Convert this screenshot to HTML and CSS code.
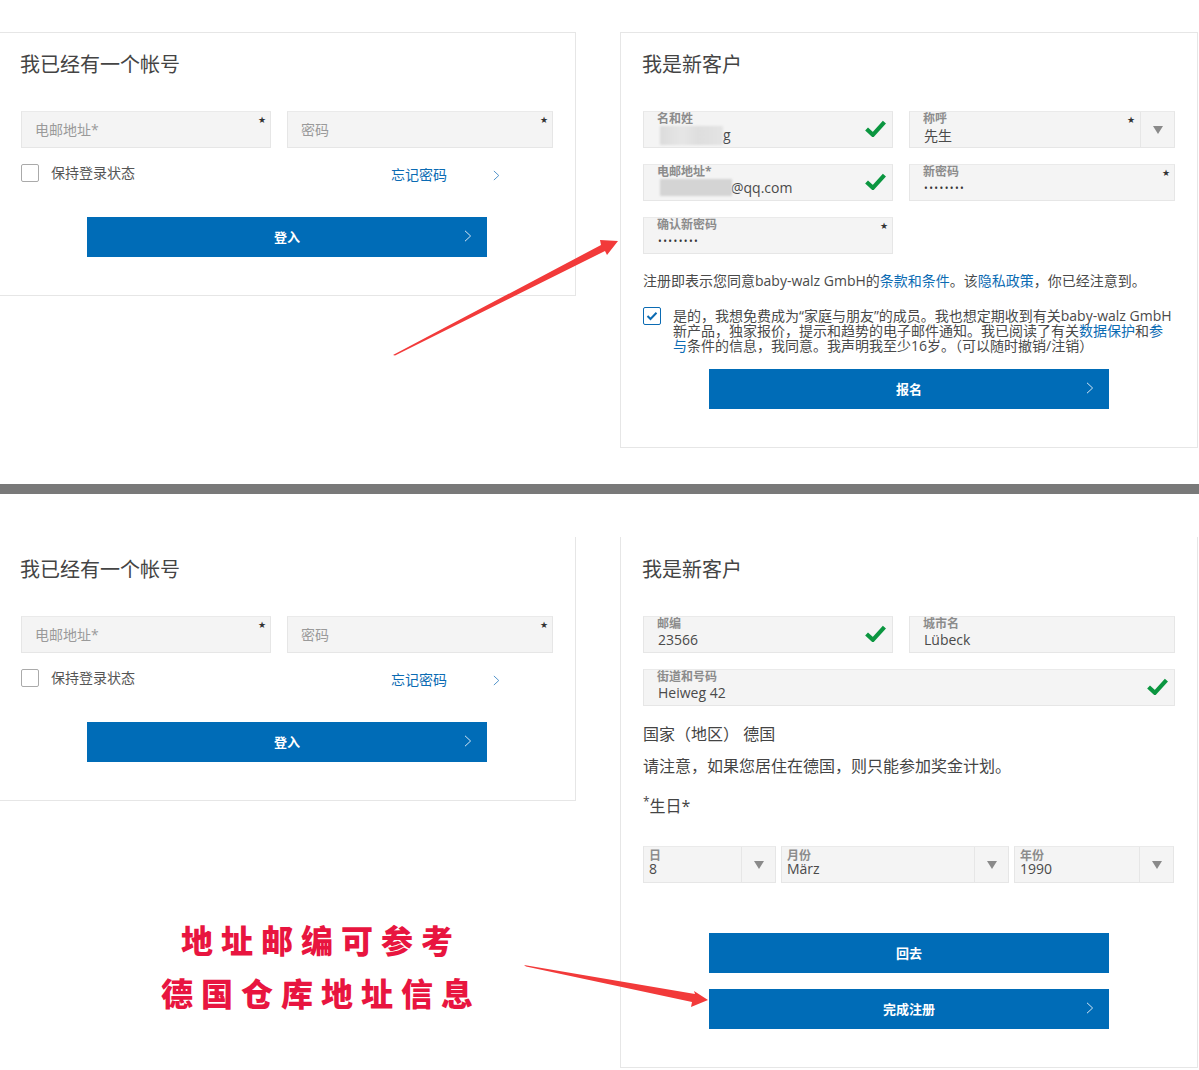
FILE: index.html
```html
<!DOCTYPE html>
<html lang="zh">
<head>
<meta charset="utf-8">
<title>注册</title>
<link rel="stylesheet" href="styles.css">
</head>
<body>
<div class="page">
  <section class="shot shot-top">
    <div class="card login">
      <h2>我已经有一个帐号</h2>
      <div class="row">
        <div class="field w250 empty"><span class="ph">电邮地址*</span><span class="star">★</span></div>
        <div class="field w266 empty"><span class="ph">密码</span><span class="star">★</span></div>
      </div>
      <div class="keep">
        <span class="box"></span><span class="keep-text">保持登录状态</span>
        <a class="forgot">忘记密码</a>
        <svg class="fchev" viewBox="0 0 8 12"><path d="M1 .8 6.6 6 1 11.2"/></svg>
      </div>
      <div class="btn login-btn">登入<svg class="chev" viewBox="0 0 8 12"><path d="M1 .8 6.6 6 1 11.2"/></svg></div>
    </div>
    <div class="card reg reg-top">
      <h2>我是新客户</h2>
      <div class="row">
        <div class="field w250"><label>名和姓</label><span class="val vg">g</span><i class="blur b1"></i>
          <svg class="ok" viewBox="0 0 20 16"><path d="M1.5 8.5 7.5 14 18.5 2"/></svg></div>
        <div class="field w266 sel"><label>称呼</label><span class="val cj">先生</span><span class="star s2">★</span><span class="drop"><b></b></span></div>
      </div>
      <div class="row">
        <div class="field w250"><label>电邮地址*</label><span class="val vr">@qq.com</span><i class="blur b2"></i>
          <svg class="ok" viewBox="0 0 20 16"><path d="M1.5 8.5 7.5 14 18.5 2"/></svg></div>
        <div class="field w266"><label>新密码</label><span class="val dots">••••••••</span><span class="star">★</span></div>
      </div>
      <div class="row">
        <div class="field w250"><label>确认新密码</label><span class="val dots">••••••••</span><span class="star">★</span></div>
      </div>
      <p class="terms">注册即表示您同意baby-walz GmbH的<a>条款和条件</a>。该<a>隐私政策</a>，你已经注意到。</p>
      <div class="consent">
        <span class="box on"><svg viewBox="0 0 12 10"><path d="M1.5 5 4.5 8 10.5 1.8"/></svg></span>
        <p>是的，我想免费成为“家庭与朋友”的成员。我也想定期收到有关baby-walz GmbH新产品，独家报价，提示和趋势的电子邮件通知。我已阅读了有关<a>数据保护</a>和<a>参与</a>条件的信息，我同意。我声明我至少16岁。（可以随时撤销/注销）</p>
      </div>
      <div class="btn reg-btn">报名<svg class="chev" viewBox="0 0 8 12"><path d="M1 .8 6.6 6 1 11.2"/></svg></div>
    </div>
  </section>

  <div class="divider"></div>

  <section class="shot shot-bottom">
    <div class="card login no-top">
      <h2>我已经有一个帐号</h2>
      <div class="row">
        <div class="field w250 empty"><span class="ph">电邮地址*</span><span class="star">★</span></div>
        <div class="field w266 empty"><span class="ph">密码</span><span class="star">★</span></div>
      </div>
      <div class="keep">
        <span class="box"></span><span class="keep-text">保持登录状态</span>
        <a class="forgot">忘记密码</a>
        <svg class="fchev" viewBox="0 0 8 12"><path d="M1 .8 6.6 6 1 11.2"/></svg>
      </div>
      <div class="btn login-btn">登入<svg class="chev" viewBox="0 0 8 12"><path d="M1 .8 6.6 6 1 11.2"/></svg></div>
    </div>
    <div class="card reg no-top">
      <h2>我是新客户</h2>
      <div class="row">
        <div class="field w250"><label>邮编</label><span class="val">23566</span>
          <svg class="ok" viewBox="0 0 20 16"><path d="M1.5 8.5 7.5 14 18.5 2"/></svg></div>
        <div class="field w266"><label>城市名</label><span class="val">Lübeck</span></div>
      </div>
      <div class="row">
        <div class="field w532"><label>街道和号码</label><span class="val">Heiweg 42</span>
          <svg class="ok" viewBox="0 0 20 16"><path d="M1.5 8.5 7.5 14 18.5 2"/></svg></div>
      </div>
      <p class="plain country">国家（地区） 德国</p>
      <p class="plain note">请注意，如果您居住在德国，则只能参加奖金计划。</p>
      <p class="birth"><sup>*</sup>生日*</p>
      <div class="dates">
        <div class="field date d1 sel"><label>日</label><span class="val">8</span><span class="drop"><b></b></span></div>
        <div class="field date d2 sel"><label>月份</label><span class="val">März</span><span class="drop"><b></b></span></div>
        <div class="field date d3 sel"><label>年份</label><span class="val">1990</span><span class="drop"><b></b></span></div>
      </div>
      <div class="btn back-btn">回去</div>
      <div class="btn done-btn">完成注册<svg class="chev" viewBox="0 0 8 12"><path d="M1 .8 6.6 6 1 11.2"/></svg></div>
    </div>
  </section>

  <div class="callout"><span>地址邮编可参考</span><span>德国仓库地址信息</span></div>
  <svg class="arrows" viewBox="0 0 1199 1070">
    <path d="M393 355 395 355.5 605 251 607 255 618 241 600 240 601 245Z"/>
    <path d="M524 965 526 966.5 692 1002 691 1007 708 1000 694 991 695 994Z"/>
  </svg>
</div>
</body>
</html>
```
FILE: styles.css
```css
* { box-sizing: border-box; }
html, body { margin: 0; background: #fff; }
body {
  font-family: "Open Sans", "Noto Sans CJK SC", sans-serif;
  font-size: 14px;
  color: #444;
}
.page { position: relative; width: 1199px; height: 1070px; overflow: hidden; }
.shot { display: flex; align-items: flex-start; }
.shot-top { height: 484px; padding-top: 32px; }
.shot-bottom { height: 576px; padding-top: 43px; }
.divider { height: 10px; background: #797979; }

.card { border: 1px solid #e6e6e6; background: #fff; }
.card.no-top { border-top: 0; }
.login { width: 577px; height: 264px; margin-left: -1px; padding: 0 21px; }
.reg { width: 578px; height: 531px; margin-left: 44px; padding: 0 22px; }
.reg-top { height: 416px; }

h2 { margin: 0 0 0 -1px; height: 78px; padding-top: 17px; font-size: 20px; line-height: 30px; font-weight: 400; color: #444; }
.no-top h2 { height: 79px; padding-top: 18px; }

.row { display: flex; gap: 16px; margin-bottom: 16px; }
.field {
  position: relative; height: 37px; background: #f4f4f4;
  border: 1px solid #e6e6e6; border-top-color: #eaeaea; padding: 0 14px; flex: none;
}
.w250 { width: 250px; }
.w266 { width: 266px; }
.w532 { width: 532px; }
.field label { display: block; margin-left: -1px; font-size: 12px; line-height: 13px; color: #8c8c8c; font-weight: 700; }
.val { display: block; font-size: 14px; line-height: 17px; color: #4a4a4a; margin-top: 1px; }
.val.cj { margin-top: 2px; }
.vg { margin-left: 65px; }
.vr { margin: 1px 0 0 73px; }
.dots { font-size: 10px; letter-spacing: 1.4px; line-height: 14px; margin-top: 3px; color: #333; }
.ph { display: block; margin-left: -1px; line-height: 36px; color: #9a9a9a; font-size: 14px; }
.star { position: absolute; right: 4px; top: 3px; font-family: "DejaVu Sans", sans-serif; font-size: 9px; line-height: 10px; color: #333; }
.s2 { right: 39px; }
.ok { position: absolute; right: 6px; top: 8px; width: 21px; height: 17px; fill: none; stroke: #0b9640; stroke-width: 4; }
.blur { position: absolute; display: block; filter: blur(1px); }
.b1 { left: 16px; top: 14px; width: 63px; height: 19px; background: linear-gradient(90deg, #dcdcdc, #e6e6e6 35%, #dedede 60%, #e4e4e4); }
.b2 { left: 16px; top: 14px; width: 72px; height: 17px; background: #d4d4d4; }

.drop { position: absolute; right: 0; top: 0; bottom: 0; width: 34px; border-left: 1px solid #e6e6e6; display: flex; align-items: center; justify-content: center; }
.drop b { width: 0; height: 0; border: 5px solid transparent; border-top: 8px solid #8a8a8a; border-bottom: 0; }

.keep { display: flex; align-items: center; height: 18px; position: relative; }
.box { width: 18px; height: 18px; border: 1px solid #aaa; border-radius: 2px; background: #fff; flex: none; display: flex; align-items: center; justify-content: center; }
.keep-text { margin: -2px 0 0 12px; font-size: 14px; color: #555; }
.forgot { margin-left: 256px; margin-top: 2px; font-size: 14px; color: #0b6bb3; }
.fchev { margin-left: 46px; margin-top: 4px; width: 7px; height: 11px; fill: none; stroke: #3c86c4; stroke-width: 1; }

.btn { position: relative; width: 400px; height: 40px; background: #006cb7; color: #fff; font-size: 13px; font-weight: 700; text-align: center; line-height: 41px; }
.chev { position: absolute; right: 15px; top: 13px; width: 8px; height: 12px; fill: none; stroke: #d5e6f4; stroke-width: 1; }
.login-btn { margin: 35px 0 0 66px; }
.reg-btn { margin: 8px 0 0 66px; }
.back-btn { margin: 50px 0 0 66px; }
.done-btn { margin: 16px 0 0 66px; }

.terms { margin: 18px 0 0; font-size: 14px; line-height: 18px; color: #4a4a4a; white-space: nowrap; }
a { color: #0b6bb3; text-decoration: none; }
.consent { display: flex; margin-top: 17px; height: 54px; }
.box.on { border-color: #0b6bb3; }
.box.on svg { width: 12px; height: 10px; fill: none; stroke: #0b6bb3; stroke-width: 2; }
.consent p { margin: 1px 0 0 12px; width: 500px; font-size: 14px; line-height: 15px; color: #4a4a4a; }

.plain { margin: 0; font-size: 16px; line-height: 20px; color: #444; }
.country { margin-top: 18px; }
.note { margin-top: 12px; }
.birth { margin: 18px 0 0; font-size: 16px; line-height: 24px; color: #444; }
.birth sup { font-size: 12px; line-height: 0; }
.dates { display: flex; gap: 5px; margin-top: 28px; }
.date { padding: 0 5px; }
.date label { margin-left: 0; line-height: 13px; font-size: 12px; padding-top: 2px; }
.date .val { margin-top: 0; line-height: 14px; }
.d1 { width: 133px; }
.d2 { width: 228px; }
.d3 { width: 160px; }

.callout {
  position: absolute; left: 121px; top: 919px; width: 400px;
  display: flex; flex-direction: column; align-items: center; gap: 13px;
  font-family: "Noto Sans CJK SC", sans-serif; font-weight: 900; font-size: 32px; line-height: 40px;
  letter-spacing: 8px; color: #e8153f;
}
.arrows { position: absolute; left: 0; top: 0; width: 1199px; height: 1070px; fill: #f23a3a; pointer-events: none; }
```
